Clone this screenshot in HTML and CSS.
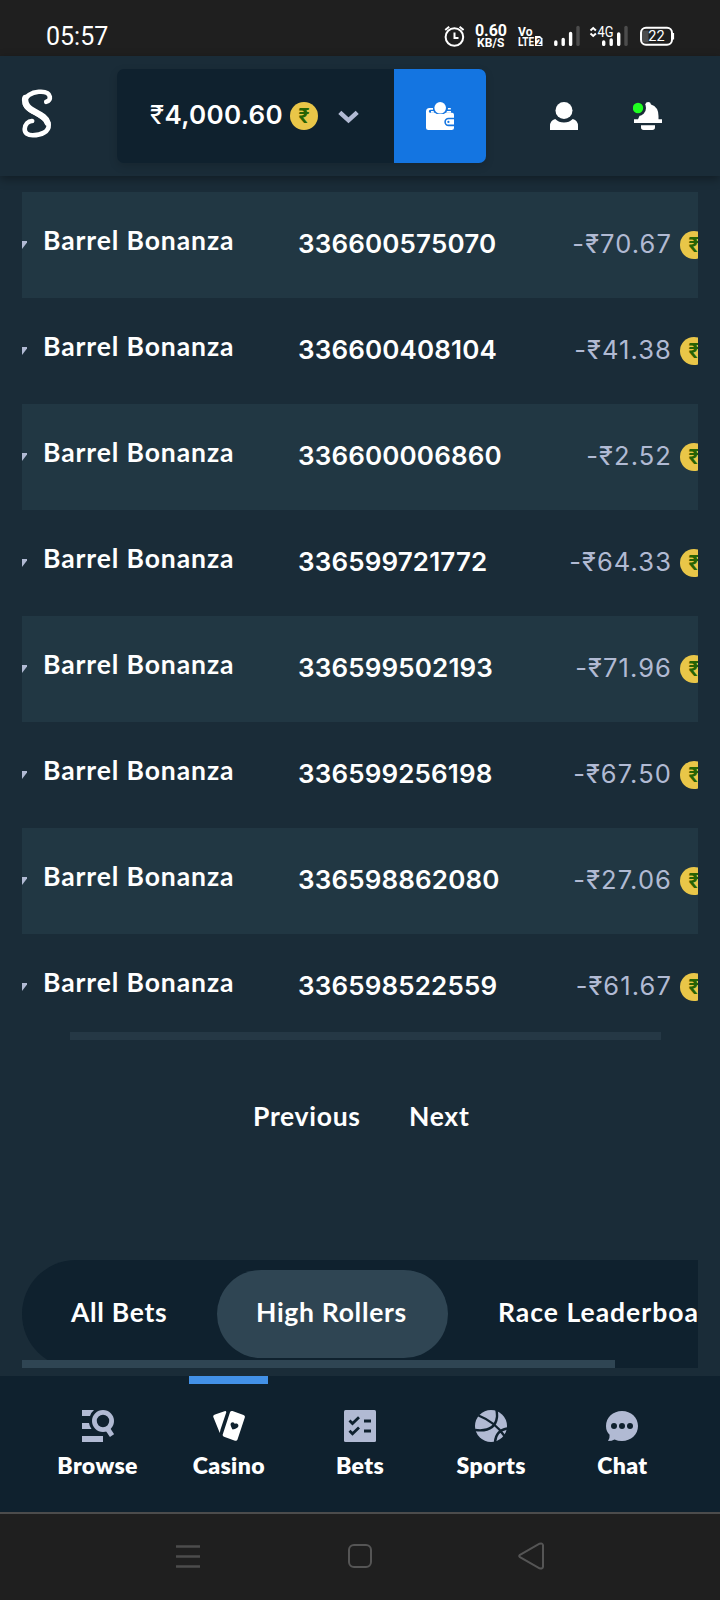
FILE: index.html
```html
<!DOCTYPE html>
<html lang="en">
<head>
  <meta charset="UTF-8">
  <meta name="viewport" content="width=device-width, initial-scale=1">
  <title>My Bets</title>
  <link rel="stylesheet" href="styles.css">
</head>
<body>
  <div class="status">
    <span class="clock">05:57</span>
    <svg class="status-icons" width="240" height="36" viewBox="440 20 240 36" fill="none">
      <!-- alarm -->
      <circle cx="454.400" cy="37" r="8.800" stroke="#fff" stroke-width="2"/>
      <path d="M454.500 32.500v5.500h4M445.200 30l4-3.200M463.600 30l-4-3.200" stroke="#fff" stroke-width="2"/>
      <g fill="#fff" font-family="Roboto, sans-serif" font-weight="700">
        <text x="475" y="36" font-size="16" textLength="32">0.60</text>
        <text x="477" y="47" font-size="12" textLength="27.500">KB/S</text>
        <text x="518" y="35.500" font-size="13" textLength="14.500" lengthAdjust="spacingAndGlyphs">Vo</text>
        <text x="518" y="46" font-size="13" textLength="16" lengthAdjust="spacingAndGlyphs">LTE</text>
      </g>
      <path d="M535 36h5l2.500 2.500V46H535z" fill="#fff"/>
      <text x="536.300" y="45" font-family="Roboto, sans-serif" font-weight="700" font-size="9" fill="#1f1f1f">2</text>
      <!-- sim 1 and 2 -->
      <g stroke="#fff" stroke-width="3.400" stroke-linecap="round">
        <path d="M555.800 42v2.400M563.200 39.500v4.900M570.600 33.500v10.900"/>
        <path d="M578 27.500v16.900" stroke="#4c4c4c"/>
        <path d="M603.700 42v2.400M611.200 40v4.400M618.700 34v10.400"/>
        <path d="M626 27.500v16.900" stroke="#4c4c4c"/>
      </g>
      <path d="M590.500 30.500l2.700-2.500 2.700 2.500M590.500 33.500l2.700 2.500 2.700-2.500" stroke="#fff" stroke-width="2"/>
      <text x="597.500" y="37" font-family="Roboto, sans-serif" font-weight="400" font-size="14.500" fill="#fff" textLength="16" lengthAdjust="spacingAndGlyphs">4G</text>
      <!-- battery -->
      <path d="M643 30.500h5.500v12H643q-1 0-1-2v-8q0-2 1-2z" fill="#4c4c4c"/>
      <rect x="641" y="27.800" width="31" height="17" rx="5" stroke="#fff" stroke-width="2"/>
      <path d="M673 33v6.500" stroke="#fff" stroke-width="2.200"/>
      <text x="648.300" y="41.300" font-family="Roboto, sans-serif" font-weight="400" font-size="14.500" fill="#fff">22</text>
    </svg>
  </div>

  <header class="header">
    <svg class="logo" width="32" height="50" viewBox="21 88 32 50" fill="none" stroke="#fff" stroke-linecap="round" stroke-linejoin="round">
      <path d="M46.200 101.800c3-.6 4-3 3.600-5.200-.8-4-5.800-5.200-11-4.800-7.500.6-13.600 4.200-14 10-.3 5 4.300 7.800 10.600 11.300 7.400 4 12.800 7.200 13.300 11.700.4 6.500-7 10.500-16 10.500-5 0-8-2.300-8-6.300 0-4.500 3.500-8.200 7.500-8" stroke-width="4.600"/>
      <path d="M25.300 98c-1.300 7 3.500 10.500 10.500 14.300 6 3.300 10.500 6 11.700 10.500" stroke-width="6.400"/>
    </svg>
    <div class="wallet">
      <div class="balance">
        <span class="balance-amount"><span class="sign">₹</span>4,000.60</span>
        <span class="coin">₹</span>
        <svg class="chevron" width="22" height="14" viewBox="0 0 22 14" fill="none" stroke="#b1bad3" stroke-width="4.500"><path d="M1.800 2.300l8.700 8 8.700-8"/></svg>
      </div>
      <button class="wallet-btn" aria-label="Wallet">
        <svg width="28" height="28" viewBox="0 0 28 28">
          <path fill="#fff" d="M0 9.500Q0 6 3.500 6H7v1.800H4.500q-1.700 0-1.700 1.500t1.700 1.500H26q2 0 2 2v3h-5.500a4.200 4.200 0 0 0 0 8.400H28v1.300q0 2.500-2.500 2.500h-23Q0 28 0 25.500z"/>
          <circle cx="14.200" cy="6" r="7.200" fill="#1475e1"/>
          <path fill="#fff" d="M5 12h18v3H5z"/>
          <circle cx="14.200" cy="5.800" r="5.800" fill="#fff"/>
          <path fill="#fff" d="M5 9h2.500l.8 1.800H5zM21 9h4v1.800h-4.800zM22 6h2.800v1.500h-3zM22.500 17.300H28v5.200h-5.500a2.600 2.600 0 0 1 0-5.200z"/>
          <circle cx="22.400" cy="19.900" r="1.100" fill="#1475e1"/>
        </svg>
      </button>
    </div>
    <div class="actions">
      <svg width="28" height="28" viewBox="0 0 28 28" fill="#fff">
        <circle cx="14" cy="8.500" r="8.500"/>
        <path d="M5.200 17q3.600 3.500 8.800 3.500t8.800-3.500Q28 18.500 28 24v4H0v-4q0-5.500 5.200-7z"/>
      </svg>
      <svg width="30" height="28" viewBox="0 0 30 28">
        <path fill="#fff" d="M1 17.300h4q2-3 2-8 0-6 5.300-7Q12.800 0 15.200 0t2.800 2.400q7.500 2.300 7.500 11.600v3.300H29V21H1zM8 23.300h14v2q0 2.700-2.700 2.700h-8.600Q8 28 8 25.300z"/>
        <circle cx="5" cy="6" r="8" fill="#1a2c38"/>
        <circle cx="5" cy="6" r="5.200" fill="#1fff20"/>
      </svg>
    </div>
  </header>

  <main class="content">
    <div class="bets">
      <div class="row"><i class="mark"></i><span class="game">Barrel Bonanza</span><span class="bet-id">336600575070</span><span class="payout">-₹70.67</span><span class="coin">₹</span></div>
      <div class="row"><i class="mark"></i><span class="game">Barrel Bonanza</span><span class="bet-id">336600408104</span><span class="payout">-₹41.38</span><span class="coin">₹</span></div>
      <div class="row"><i class="mark"></i><span class="game">Barrel Bonanza</span><span class="bet-id">336600006860</span><span class="payout">-₹2.52</span><span class="coin">₹</span></div>
      <div class="row"><i class="mark"></i><span class="game">Barrel Bonanza</span><span class="bet-id">336599721772</span><span class="payout">-₹64.33</span><span class="coin">₹</span></div>
      <div class="row"><i class="mark"></i><span class="game">Barrel Bonanza</span><span class="bet-id">336599502193</span><span class="payout">-₹71.96</span><span class="coin">₹</span></div>
      <div class="row"><i class="mark"></i><span class="game">Barrel Bonanza</span><span class="bet-id">336599256198</span><span class="payout">-₹67.50</span><span class="coin">₹</span></div>
      <div class="row"><i class="mark"></i><span class="game">Barrel Bonanza</span><span class="bet-id">336598862080</span><span class="payout">-₹27.06</span><span class="coin">₹</span></div>
      <div class="row"><i class="mark"></i><span class="game">Barrel Bonanza</span><span class="bet-id">336598522559</span><span class="payout">-₹61.67</span><span class="coin">₹</span></div>
      <div class="bets-scroll"></div>
    </div>

    <div class="pager">
      <a class="prev">Previous</a>
      <a class="next">Next</a>
    </div>

    <div class="tabs">
      <div class="tabs-track">
        <span class="tab">All Bets</span>
        <span class="tab active">High Rollers</span>
        <span class="tab race">Race Leaderboard</span>
      </div>
      <div class="tabs-scroll"></div>
    </div>
  </main>

  <nav class="nav">
    <a class="nav-item browse">
      <svg width="32" height="32" viewBox="0 0 32 32" fill="#b1bad3">
        <path d="M0 0h12Q9 2.500 8 6H0zM0 13h7q.5 3.500 2.500 6H0zM0 26h21v6H0z"/>
        <circle cx="21" cy="11" r="8.600" fill="none" stroke="#b1bad3" stroke-width="4.800"/>
        <path d="M25 18l5 7.500" stroke="#b1bad3" stroke-width="5"/>
      </svg>
      <span>Browse</span>
    </a>
    <a class="nav-item casino current">
      <svg width="32" height="32" viewBox="0 0 32 32" fill="#fff">
        <path d="M2 4.500L11.500 1.200q1.700-.4 1.800 1L7.500 19.500 6.800 23 .3 7q-.5-1.900 1.700-2.500z"/>
        <path d="M19.500 1l11 4q1.900.8 1.300 2.500L24.500 29.500q-.7 1.800-2.500 1.200L11 26.800q-1.800-.8-1.200-2.600L17 2.300q.7-1.800 2.500-1.300z"/>
        <path fill="#0f212e" d="M18.200 12.800c1.600-1.200 3.300-.4 3.500 1.200 1.200-.9 3.400-.5 3.700 1.400.3 2-2.500 3.200-5.800 4.200-1.200-2.400-3-5.200-1.400-6.800z"/>
      </svg>
      <span>Casino</span>
    </a>
    <a class="nav-item mybets">
      <svg width="32" height="32" viewBox="0 0 32 32">
        <rect width="32" height="32" rx="1.500" fill="#b1bad3"/>
        <path d="M5.500 10.500l3 3 6.500-6.200M5.500 20.800l3 3 6.500-6.200M20 11h7M20 21h7" fill="none" stroke="#0f212e" stroke-width="2.800"/>
      </svg>
      <span>Bets</span>
    </a>
    <a class="nav-item sports">
      <svg width="32" height="32" viewBox="0 0 32 32" fill="none" stroke="#0f212e" stroke-width="2.400">
        <circle cx="16" cy="16" r="16" fill="#b1bad3" stroke="none"/>
        <path d="M3.500 5.500Q20 12 29.500 26M0 20q20 2.500 22-13 .2-3-.5-7M32 18.500q-11 2-12 13.500"/>
      </svg>
      <span>Sports</span>
    </a>
    <a class="nav-item chat">
      <svg width="32" height="32" viewBox="0 0 32 32">
        <path fill="#b1bad3" d="M16 1c9 0 16 6.500 16 15s-7 15-16 15q-4 0-7.500-1.600Q6 31 2 31q2-2.500 1.600-6.200Q0 21.300 0 16C0 7.500 7 1 16 1z"/>
        <g fill="#0f212e"><circle cx="8" cy="16" r="3"/><circle cx="16" cy="16" r="3"/><circle cx="24" cy="16" r="3"/></g>
      </svg>
      <span>Chat</span>
    </a>
  </nav>

  <div class="sysnav">
    <svg width="26" height="28" viewBox="0 0 26 28" stroke="#4c4c4c" stroke-width="2.500"><path d="M1 4.500h24M1 14.500h24M1 24.500h24"/></svg>
    <svg width="26" height="28" viewBox="0 0 26 28" fill="none" stroke="#555" stroke-width="2"><rect x="2" y="3" width="22" height="22" rx="5"/></svg>
    <svg width="26" height="28" viewBox="0 0 26 28" fill="none" stroke="#555" stroke-width="2"><path d="M2 12.800L21.500 1.700q3-1 3.500 1.500v21.600q-.5 2.500-3.500 1.500L2 15.200q-1.600-1.200 0-2.400z"/></svg>
  </div>
</body>
</html>
```

FILE: styles.css
```css
* {
  box-sizing: border-box;
}
body {
  margin: 0;
  width: 720px;
  height: 1600px;
  overflow: hidden;
  background: #1a2c38;
  color: #fff;
  font-family: Lato, "Liberation Sans", sans-serif;
  font-size: 26.5px;
  font-weight: 700;
  letter-spacing: 0.9px;
  display: flex;
  flex-direction: column;
}
svg {
  display: block;
  flex-shrink: 0;
}

.status {
  height: 56px;
  background: #1f1f1f;
  display: flex;
  justify-content: space-between;
  align-items: flex-start;
  padding: 20px 40px 0 46px;
  letter-spacing: 0;
}
.clock {
  font: 400 25px/33px Roboto, sans-serif;
}

.header {
  height: 120px;
  display: flex;
  align-items: center;
  padding-left: 21px;
  box-shadow: 0 3px 9px rgba(0,0,0,0.35);
}
.logo {
  margin-top: -6px;
}
.wallet {
  display: flex;
  width: 369px;
  height: 94px;
  margin-left: 64px;
  border-radius: 7px;
  overflow: hidden;
  box-shadow: 0 3px 8px rgba(0,0,0,0.15);
}
.balance {
  width: 277px;
  background: #0f212e;
  display: flex;
  align-items: center;
  padding-left: 33px;
}
.balance-amount {
  width: 140px;
  font-family: Inter, sans-serif;
  font-size: 26px;
  font-weight: 600;
  letter-spacing: 0.3px;
  margin-top: -3px;
}
.sign {
  font-weight: 400;
}
.chevron {
  margin: 2px 0 0 20px;
}
.wallet-btn {
  flex: 1;
  border: 0;
  padding: 0;
  background: #1475e1;
  display: flex;
  align-items: center;
  justify-content: center;
}
.actions {
  display: flex;
  gap: 55px;
  margin-left: 64px;
}
.coin {
  width: 28px;
  height: 28px;
  border-radius: 50%;
  background: #e9c648;
  color: #276304;
  font: 700 20px/28px Inter, sans-serif;
  letter-spacing: 0;
  text-align: center;
  flex-shrink: 0;
}

.content {
  height: 1200px;
  padding: 16px 22px 0;
}
.bets {
  position: relative;
  height: 848px;
  overflow: hidden;
}
.row {
  width: 686px;
  height: 106px;
  display: grid;
  grid-template-columns: 21px 255px 1fr auto 28px;
  align-items: start;
  line-height: 32px;
}
.row:nth-child(odd) {
  background: #213743;
}
.mark {
  width: 5px;
  height: 8px;
  margin-top: 49px;
  background: #b1bad3;
  clip-path: polygon(0 0, 100% 0, 100% 20%, 0 100%);
}
.game {
  padding-top: 32px;
}
.bet-id {
  padding-top: 36px;
  font-family: Inter, sans-serif;
  font-size: 26px;
  font-weight: 600;
  letter-spacing: 0.15px;
}
.payout {
  padding: 36px 8px 0 0;
  font-family: Inter, sans-serif;
  font-size: 25.5px;
  font-weight: 400;
  letter-spacing: 1.1px;
  color: #b1bad3;
}
.row .coin {
  margin-top: 39px;
}
/* lies over the last row */
.bets-scroll {
  position: absolute;
  left: 48px;
  bottom: 0;
  width: 591px;
  height: 8px;
  background: #253845;
}

.pager {
  display: flex;
  height: 220px;
  padding: 60px 0 0 231px;
  line-height: 32px;
  letter-spacing: 0.7px;
}
.prev {
  width: 156px;
}

.tabs {
  position: relative;
  height: 108px;
  overflow: hidden;
}
.tabs-track {
  display: flex;
  width: 900px;
  height: 108px;
  padding: 10px;
  background: #0f212e;
  border-radius: 54px 0 0 54px;
  line-height: 85px;
  letter-spacing: 0.7px;
  white-space: nowrap;
}
.tab {
  width: 185px;
  padding-left: 39px;
}
.tab.active {
  width: 231px;
  height: 88px;
  background: #2f4553;
  border-radius: 44px;
}
.tab.race {
  width: 300px;
  padding-left: 50px;
  letter-spacing: 1px;
}
.tabs-scroll {
  position: absolute;
  left: 0;
  bottom: 0;
  width: 593px;
  height: 8px;
  background: #2f4553;
}

.nav {
  height: 136px;
  padding: 0 32px;
  background: #0f212e;
  display: flex;
}
.nav-item {
  flex: 1;
  display: flex;
  flex-direction: column;
  align-items: center;
  padding-top: 34px;
  font-size: 23px;
  font-weight: 800;
  letter-spacing: 0.4px;
  line-height: 28px;
}
.nav-item span {
  margin-top: 9px;
}
.nav-item.current {
  background: linear-gradient(#4391e7, #4391e7) 26px 0 / 79px 8px no-repeat;
}

.sysnav {
  height: 88px;
  border-top: 2px solid #4c4c4c;
  background: #1f1f1f;
  display: flex;
  justify-content: space-between;
  padding: 28px 176px 0 175px;
}
```
